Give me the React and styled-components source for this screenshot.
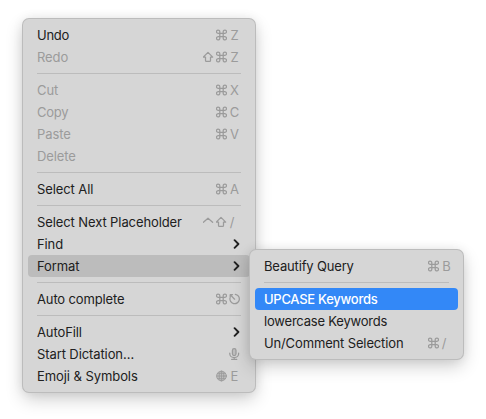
import React from 'react';
import styled, { createGlobalStyle, css } from 'styled-components';

const GlobalStyle = createGlobalStyle`
  * { box-sizing: border-box; }
  html, body { margin: 0; background: #fff; overflow: hidden; }
  body { font-family: Inter, "Liberation Sans", sans-serif; font-size: 13px; color: #202020; }
`;

const Desktop = styled.main`
  position: relative;
  width: 486px;
  height: 419px;
  padding: 19px 0 0 23px;
  background: #fff;
`;

const Menu = styled.nav`
  display: flex;
  flex-direction: column;
  width: ${({ $width }) => $width}px;
  padding: 5px;
  border-radius: 6px;
  background: #d6d6d6;
  box-shadow: 0 0 0 1px #bcbcbc, 0 7px 18px rgba(0, 0, 0, 0.2), 0 0 12px rgba(0, 0, 0, 0.08);
`;

const Submenu = styled(Menu)`
  position: absolute;
  left: 250px;
  top: 250px;
`;

const Divider = styled.hr`
  width: calc(100% - 18px);
  height: 1px;
  margin: 5px 9px;
  border: 0;
  background: #bcbcbc;
`;

const Item = styled.div`
  display: flex;
  align-items: center;
  justify-content: space-between;
  height: 22px;
  padding: 0 ${({ $inset }) => $inset}px 0 9px;
  border-radius: 4px;
  ${({ $disabled }) => $disabled && css`color: #9b9b9b;`}
  ${({ $open }) => $open && css`background: #bcbcbc;`}
  ${({ $active }) => $active && css`background: #3388f7; color: #fff; font-weight: 500;`}
`;

const Label = styled.span`
  white-space: nowrap;
  line-height: 22px;
  letter-spacing: ${({ $tracking }) => $tracking}px;
`;

const Shortcut = styled.span`
  display: flex;
  align-items: center;
  gap: 2px;
  color: #9b9b9b;
  line-height: 22px;
`;

const Key = styled.span`
  width: 11px;
  text-align: center;
  ${({ $slash }) => $slash && css`padding-right: 5px;`}
`;

const Glyph = styled.svg`
  display: block;
  width: 11px;
  height: 12px;
  fill: none;
  stroke: currentColor;
  stroke-width: ${({ $weight }) => $weight || 1.25};
  stroke-linecap: round;
  stroke-linejoin: round;
`;

const Command = () => (
  <Glyph viewBox="0 0 11 12">
    <path d="M3.8 4.3H7.2V7.7H3.8ZM3.8 4.3H2.5A1.65 1.65 0 1 1 3.8 2.7ZM7.2 4.3H8.5A1.65 1.65 0 1 0 7.2 2.7ZM3.8 7.7H2.5A1.65 1.65 0 1 0 3.8 9.3ZM7.2 7.7H8.5A1.65 1.65 0 1 1 7.2 9.3Z" />
  </Glyph>
);
const Shift = () => (
  <Glyph viewBox="0 0 11 12">
    <path d="M5 1.4L9.7 6.1H7.5V9.4Q7.5 10.3 6.6 10.3H3.4Q2.5 10.3 2.5 9.4V6.1H.3Z" />
  </Glyph>
);
const Control = () => (
  <Glyph viewBox="0 0 11 12"><path d="M.4 6.3L5 2.2L9.6 6.3" /></Glyph>
);
const Escape = () => (
  <Glyph viewBox="0 0 11 12">
    <path d="M6.3 1.3A4.7 4.7 0 1 1 1.1 4.7M5.6 6.2L1.3 1.8M1.2 4V1.7H3.5" />
  </Glyph>
);
const Mic = () => (
  <Glyph viewBox="0 0 11 12">
    <rect x="3.4" y=".7" width="3.6" height="6.8" rx="1.8" fill="currentColor" fillOpacity=".4" />
    <path d="M.8 5.1V6A4.4 3.5 0 0 0 9.6 6V5.1M5.2 9.5V11.2M2.6 11.3H7.8" />
  </Glyph>
);
const Globe = () => (
  <Glyph viewBox="0 0 11 12" $weight={0.8}>
    <circle cx="5.5" cy="6" r="4.9" fill="currentColor" fillOpacity=".4" />
    <ellipse cx="5.5" cy="6" rx="2.3" ry="4.8" />
    <path d="M5.5 1.2V10.8M.7 6H10.3M1.5 3.4H9.5M1.5 8.6H9.5" />
  </Glyph>
);

const ChevronIcon = styled.svg`
  display: block;
  width: 7px;
  height: 10px;
  fill: none;
  stroke: #202020;
  stroke-width: 1.9;
  stroke-linecap: round;
  stroke-linejoin: round;
`;
const Chevron = () => (
  <ChevronIcon viewBox="0 0 7 10"><path d="M1.6 1.2L5.4 5L1.6 8.8" /></ChevronIcon>
);

const glyphs = { cmd: Command, shift: Shift, ctrl: Control, esc: Escape, mic: Mic, globe: Globe };

const editItems = [
  { label: 'Undo', keys: ['cmd', 'Z'], tracking: -0.25 },
  { label: 'Redo', keys: ['shift', 'cmd', 'Z'], disabled: true },
  null,
  { label: 'Cut', keys: ['cmd', 'X'], disabled: true },
  { label: 'Copy', keys: ['cmd', 'C'], disabled: true, tracking: -0.25 },
  { label: 'Paste', keys: ['cmd', 'V'], disabled: true },
  { label: 'Delete', disabled: true },
  null,
  { label: 'Select All', keys: ['cmd', 'A'] },
  null,
  { label: 'Select Next Placeholder', keys: ['ctrl', 'shift', '/'] },
  { label: 'Find', submenu: true },
  { label: 'Format', submenu: true, open: true },
  null,
  { label: 'Auto complete', keys: ['cmd', 'esc'], tracking: -0.14 },
  null,
  { label: 'AutoFill', submenu: true },
  { label: 'Start Dictation…', keys: ['mic'] },
  { label: 'Emoji & Symbols', keys: ['globe', 'E'], tracking: -0.07 },
];

const formatItems = [
  { label: 'Beautify Query', keys: ['cmd', 'B'], tracking: -0.16 },
  null,
  { label: 'UPCASE Keywords', active: true, tracking: -0.28 },
  { label: 'lowercase Keywords', tracking: -0.2 },
  { label: 'Un/Comment Selection', keys: ['cmd', '/'], tracking: -0.14 },
];

function MenuItems({ items, inset }) {
  return items.map((item, index) => {
    if (!item) return <Divider key={index} />;
    return (
      <Item key={item.label} $inset={inset} $disabled={item.disabled} $open={item.open} $active={item.active}>
        <Label $tracking={item.tracking ?? -0.1}>{item.label}</Label>
        {item.submenu && <Chevron />}
        {item.keys && (
          <Shortcut>
            {item.keys.map((key) => {
              const Icon = glyphs[key];
              return Icon ? <Icon key={key} /> : <Key key={key} $slash={key === '/'}>{key}</Key>;
            })}
          </Shortcut>
        )}
      </Item>
    );
  });
}

export default function App() {
  return (
    <>
      <GlobalStyle />
      <Desktop>
        <Menu $width={232}><MenuItems items={editItems} inset={10} /></Menu>
        <Submenu $width={213}><MenuItems items={formatItems} inset={6} /></Submenu>
      </Desktop>
    </>
  );
}
